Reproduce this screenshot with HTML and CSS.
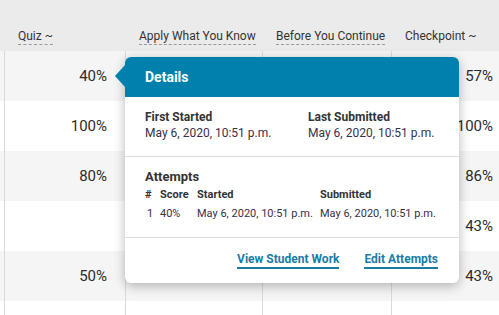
FILE: index.html
```html
<!DOCTYPE html>
<html lang="en">
<head>
    <meta charset="UTF-8">
    <title>Gradebook - Details</title>
    <link rel="stylesheet" href="styles.css">
</head>
<body>
    <div class="sheet">
        <div class="head-row">
            <div class="hcell edge"></div>
            <div class="hcell"><span class="label dashed">Quiz ~</span></div>
            <div class="hcell"><span class="label dashed">Apply What You Know</span></div>
            <div class="hcell"><span class="label dashed">Before You Continue</span></div>
            <div class="hcell"><span class="label">Checkpoint ~</span></div>
        </div>

        <div class="row shade">
            <div class="cell edge"></div>
            <div class="cell">40%</div>
            <div class="cell"></div>
            <div class="cell"></div>
            <div class="cell">57%</div>
        </div>
        <div class="row">
            <div class="cell edge"></div>
            <div class="cell">100%</div>
            <div class="cell"></div>
            <div class="cell"></div>
            <div class="cell">100%</div>
        </div>
        <div class="row shade">
            <div class="cell edge"></div>
            <div class="cell">80%</div>
            <div class="cell"></div>
            <div class="cell"></div>
            <div class="cell">86%</div>
        </div>
        <div class="row">
            <div class="cell edge"></div>
            <div class="cell"></div>
            <div class="cell"></div>
            <div class="cell"></div>
            <div class="cell">43%</div>
        </div>
        <div class="row shade">
            <div class="cell edge"></div>
            <div class="cell">50%</div>
            <div class="cell"></div>
            <div class="cell mark-cell"><span class="mark"></span></div>
            <div class="cell">43%</div>
        </div>
        <div class="row">
            <div class="cell edge"></div>
            <div class="cell"></div>
            <div class="cell"></div>
            <div class="cell"></div>
            <div class="cell"></div>
        </div>

        <!-- details popover for the selected quiz cell -->
        <div class="popover">
            <div class="pop-head">Details</div>
            <div class="pop-section dates">
                <div class="date-block">
                    <div class="title">First Started</div>
                    <div class="date">May 6, 2020, 10:51 p.m.</div>
                </div>
                <div class="date-block">
                    <div class="title">Last Submitted</div>
                    <div class="date">May 6, 2020, 10:51 p.m.</div>
                </div>
            </div>
            <div class="pop-section attempts">
                <div class="title">Attempts</div>
                <div class="attempt-grid">
                    <span class="th">#</span>
                    <span class="th">Score</span>
                    <span class="th">Started</span>
                    <span class="th">Submitted</span>
                    <span class="num">1</span>
                    <span>40%</span>
                    <span>May 6, 2020, 10:51 p.m.</span>
                    <span>May 6, 2020, 10:51 p.m.</span>
                </div>
            </div>
            <div class="pop-actions">
                <a href="#">View Student Work</a>
                <a href="#">Edit Attempts</a>
            </div>
        </div>
    </div>
</body>
</html>
```

FILE: styles.css
```css
body {
    margin: 0;
    font-family: Roboto, 'Liberation Sans', sans-serif;
    color: #333;
    background: #fff;
    overflow: hidden;
}

.sheet {
    position: relative;
    width: 499px;
    height: 315px;
    overflow: hidden;
}

.head-row,
.row {
    display: grid;
    grid-template-columns: 4px 121px 137px 129px 129px;
}

.head-row {
    height: 51px;
    background: #ebebeb;
}

.hcell {
    padding: 28px 0 0 14px;
    font-size: 12px;
    white-space: nowrap;
}

.hcell.edge {
    padding: 0;
}

.label {
    display: inline-block;
    line-height: 16px;
}

.label.dashed {
    border-bottom: 1px dashed #999;
}

.row {
    height: 50px;
}

.row.shade {
    background: #f5f5f5;
}

.cell {
    border-left: 1px solid #d9d9d9;
    display: flex;
    align-items: center;
    justify-content: flex-end;
    padding-right: 18px;
    font-size: 15px;
    color: #2b2b2b;
}

.cell.edge {
    border-left: none;
    padding: 0;
}

.cell:last-child {
    padding-right: 27px;
}

.mark-cell {
    padding-right: 33px;
    align-items: flex-end;
    padding-bottom: 18px;
}

.mark {
    width: 2px;
    height: 3px;
    background: #555;
}

/* popover */
.popover {
    position: absolute;
    left: 125px;
    top: 57px;
    width: 334px;
    background: #fff;
    border-radius: 6px;
    box-shadow: 0 3px 12px rgba(0, 0, 0, 0.28);
}

.popover::before {
    content: '';
    position: absolute;
    left: -10px;
    top: 8px;
    border-style: solid;
    border-width: 11px 10px 11px 0;
    border-color: transparent #0080ad transparent transparent;
}

.pop-head {
    height: 40px;
    background: #0080ad;
    color: #fff;
    font-weight: bold;
    font-size: 14px;
    line-height: 40px;
    padding-left: 20px;
    border-radius: 6px 6px 0 0;
}

.pop-section {
    padding: 12px 20px 14px;
    border-bottom: 1px solid #dcdcdc;
}

.dates {
    display: grid;
    grid-template-columns: 163px 1fr;
}

.title {
    font-weight: bold;
    font-size: 12px;
    line-height: 16px;
    color: #333;
}

.date {
    font-size: 12px;
    line-height: 17px;
    color: #3a3045;
}

.attempts {
    padding-top: 11px;
    padding-bottom: 16px;
}

.attempts .title {
    font-size: 13px;
    line-height: 18px;
    margin-bottom: 2px;
}

.attempt-grid {
    display: grid;
    grid-template-columns: 15px 37px 123px 1fr;
    row-gap: 5px;
    font-size: 11px;
    line-height: 14px;
    color: #3a3045;
}

.attempt-grid .th {
    font-weight: bold;
    color: #333;
}

.attempt-grid .num {
    padding-left: 2px;
}

.pop-actions {
    display: flex;
    justify-content: flex-end;
    gap: 25px;
    padding: 14px 21px 14px;
}

.pop-actions a {
    color: #1a7ca5;
    font-weight: bold;
    font-size: 12px;
    line-height: 15px;
    text-decoration: none;
    border-bottom: 2px solid #1a7ca5;
}
```
